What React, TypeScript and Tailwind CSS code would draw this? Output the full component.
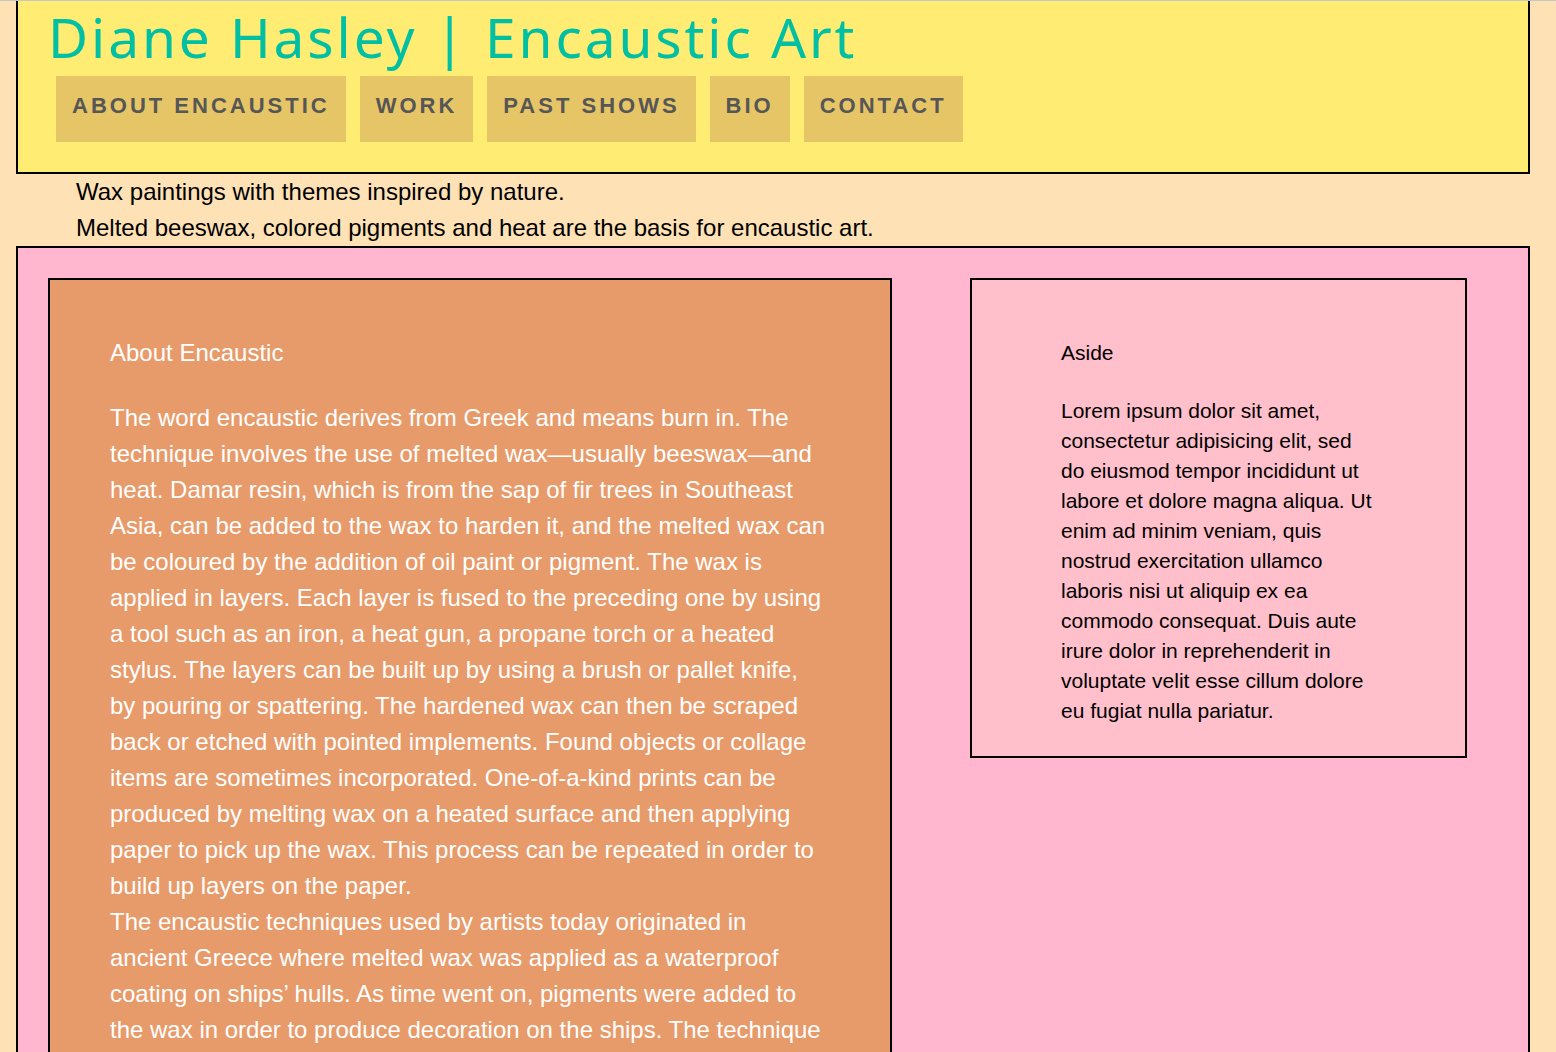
const navItems = ["About Encaustic", "Work", "Past Shows", "Bio", "Contact"];

const sans = "font-['Liberation_Sans',Arial,sans-serif]";

export default function App() {
  return (
    <div className={`min-h-screen bg-[#ffe1b6] border-t border-[#c6c6c6] ${sans}`}>
      <header className="ml-[16px] w-[1514px] bg-[#ffec73] border-x-2 border-b-2 border-black pl-[32px] pb-[30px]">
        <h1 className="font-['Noto_Sans',sans-serif] text-[55px] leading-[72px] tracking-[2.9px] text-[#00bfa3] h-[75px] -ml-[2px]">
          Diane Hasley | Encaustic Art
        </h1>
        <nav className="flex gap-[14px] pl-[6px]">
          {navItems.map((item) => (
            <a
              key={item}
              href="#"
              className="block bg-[#e6c566] text-[#565656] font-bold uppercase text-[22px] tracking-[3px] leading-[26px] pt-[17px] pb-[23px] px-[16px]"
            >
              {item}
            </a>
          ))}
        </nav>
      </header>

      <div className="pl-[76px] text-[24px] leading-[36px] text-black">
        <p>Wax paintings with themes inspired by nature.</p>
        <p>Melted beeswax, colored pigments and heat are the basis for encaustic art.</p>
      </div>

      <main className="ml-[16px] w-[1514px] bg-[#ffb6ce] border-2 border-black p-[30px] flex items-start gap-[78px]">
        <article className="w-[844px] bg-[#e89b6a] border-2 border-black text-white text-[24px] leading-[36px] pt-[55px] pl-[60px] pr-[62px] pb-[40px]">
          <h2>About Encaustic</h2>
          <p className="mt-[29px]">
            The word encaustic derives from Greek and means burn in. The technique involves the use of melted
            wax—usually beeswax—and heat. Damar resin, which is from the sap of fir trees in Southeast Asia, can
            be added to the wax to harden it, and the melted wax can be coloured by the addition of oil paint or
            pigment. The wax is applied in layers. Each layer is fused to the preceding one by using a tool such
            as an iron, a heat gun, a propane torch or a heated stylus. The layers can be built up by using a brush
            or pallet knife, by pouring or spattering. The hardened wax can then be scraped back or etched with
            pointed implements. Found objects or collage items are sometimes incorporated. One-of-a-kind prints can
            be produced by melting wax on a heated surface and then applying paper to pick up the wax. This process
            can be repeated in order to build up layers on the paper.
          </p>
          <p>
            The encaustic techniques used by artists today originated in ancient Greece where melted wax was
            applied as a waterproof coating on ships’ hulls. As time went on, pigments were added to the wax in
            order to produce decoration on the ships. The technique was later used by Greek and Roman artists to
            paint portraits on wooden panels, many of which survive today.
          </p>
        </article>

        <aside className="w-[497px] bg-[#ffbfcb] border-2 border-black text-black text-[21px] leading-[30px] pt-[58px] pl-[89px] pr-[88px] pb-[30px]">
          <h3>Aside</h3>
          <p className="mt-[28px]">
            Lorem ipsum dolor sit amet, consectetur adipisicing elit, sed do eiusmod tempor incididunt ut labore
            et dolore magna aliqua. Ut enim ad minim veniam, quis nostrud exercitation ullamco laboris nisi ut
            aliquip ex ea commodo consequat. Duis aute irure dolor in reprehenderit in voluptate velit esse cillum
            dolore eu fugiat nulla pariatur.
          </p>
        </aside>
      </main>
    </div>
  );
}
